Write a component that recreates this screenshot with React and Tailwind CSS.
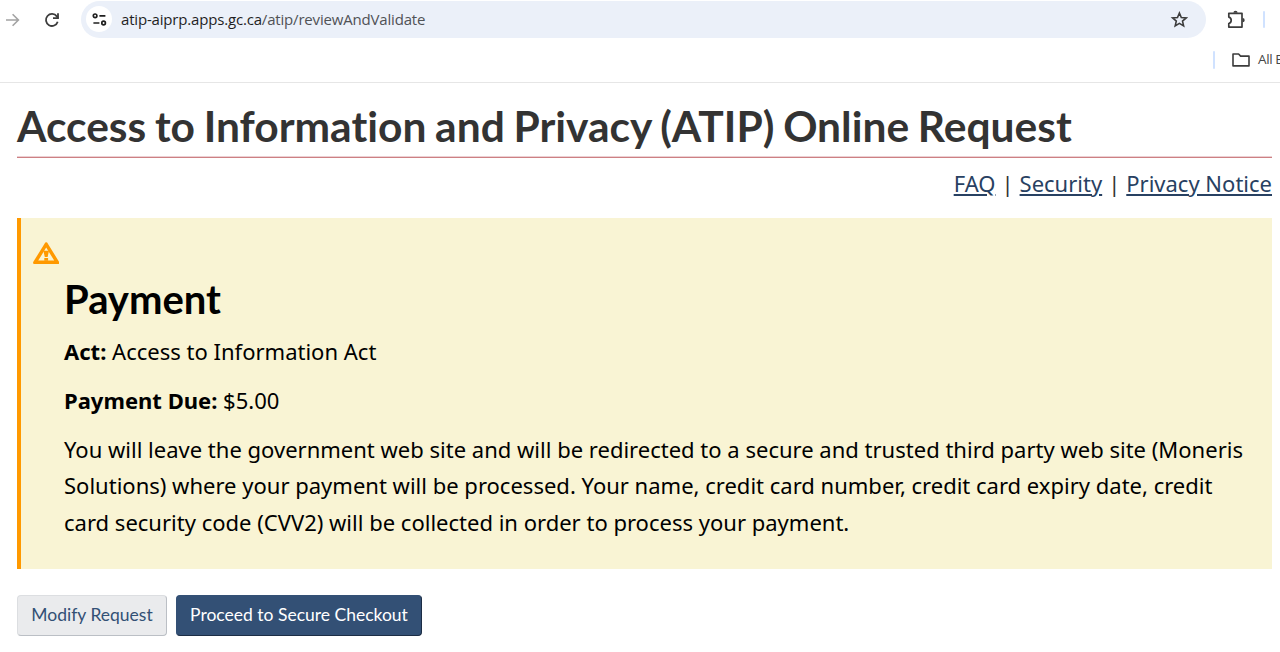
import React from 'react';

// --- ICONS ---

const ForwardIcon = () => (
  <svg viewBox="0 0 16 16" className="size-4 shrink-0" fill="none" stroke="#a3a3a3" strokeWidth="1.6">
    <path d="M2 8h12.2M8.6 2.2 14.4 8l-5.8 5.8" />
  </svg>
);

const ReloadIcon = () => (
  <svg viewBox="0 0 16 16" className="size-4 shrink-0" fill="none" stroke="#3c3c3c" strokeWidth="1.8">
    <path d="M13.7 9.7A6 6 0 1 1 12.8 4.4L14 6" />
    <path d="M14 1.2V6.1H9" />
  </svg>
);

const SiteSettingsIcon = () => (
  <svg viewBox="0 0 16 16" className="size-4" fill="none" stroke="#1f1f1f" strokeWidth="1.7">
    <circle cx="4.1" cy="4.8" r="1.8" />
    <path d="M8.4 4.8h6M2.4 12h6" />
    <circle cx="12.6" cy="12" r="1.8" />
  </svg>
);

const StarIcon = () => (
  <svg viewBox="0 0 18 18" className="size-[18px]" fill="none" stroke="#3c3c3c" strokeWidth="1.6">
    <path d="m9.4 3 1.9 4.5 4.9.4-3.7 3.2 1.1 4.8-4.2-2.5-4.2 2.5 1.1-4.8-3.7-3.2 4.9-.4z" />
  </svg>
);

const ExtensionsIcon = () => (
  <svg viewBox="0 0 20 20" className="size-5 shrink-0">
    <path
      d="M2.8 3.3h13.2v13.8H2.8v-3.6c3.2-.8 3.2-5.6 0-6.4z"
      fill="none"
      stroke="#3c3c3c"
      strokeWidth="1.7"
      strokeLinejoin="round"
    />
    <path d="M7.4 2.8a2.1 2.1 0 0 1 4.2 0zM16.6 8.1a2.1 2.1 0 0 1 0 4.2z" fill="#3c3c3c" />
  </svg>
);

const FolderIcon = () => (
  <svg viewBox="0 0 18 14" className="h-[14px] w-[18px] shrink-0" fill="none" stroke="#3c3c3c" strokeWidth="1.6" strokeLinejoin="round">
    <path d="M1 1h5.6l2 2.1H17v9.8H1z" />
  </svg>
);

const WarningIcon = () => (
  <svg viewBox="0 0 26 22" className="h-[22px] w-[26px]" fill="#ff9900">
    <path
      fillRule="evenodd"
      d="M12.3.6q.9-.9 1.8 0L26.2 20q.5 2-1 2H1.2q-1.5 0-1-2zM13.2 5.6 5.2 18.6h16z"
    />
    <path d="M10.4 8.8h5.6l-1.4 6.2h-2.8zM11.3 16h3.8v2.8h-3.8z" />
  </svg>
);

// --- COMPONENTS ---

const BrowserBar = () => (
  <div className="h-[83px] border-b border-[#e6e6e6] font-['Open_Sans',sans-serif]">
    <div className="flex h-[39px] items-center">
      <div className="ml-1 flex w-[77px] items-center gap-6">
        <ForwardIcon />
        <ReloadIcon />
      </div>
      <div className="mb-px flex h-[37px] w-[1125px] items-center rounded-full bg-[#ebf0f9] pr-[18px] pl-[5px]">
        <div className="flex size-[26px] items-center justify-center rounded-full bg-white">
          <SiteSettingsIcon />
        </div>
        <span className="ml-[9px] flex-1 text-[15px] tracking-[-0.012em] text-[#1f1f1f]">
          atip-aiprp.apps.gc.ca<span className="text-[#505256]">/atip/reviewAndValidate</span>
        </span>
        <StarIcon />
      </div>
      <div className="ml-5 flex items-center gap-[17px]">
        <ExtensionsIcon />
        <div className="h-[17px] w-[2px] rounded-[1px] bg-[#d0e2ff]" />
      </div>
    </div>
    <div className="flex h-[42px] items-center justify-end overflow-hidden whitespace-nowrap">
      <div className="h-[18px] w-[2px] shrink-0 rounded-[1px] bg-[#d0e2ff]" />
      <div className="ml-[17px] flex w-[48px] shrink-0 items-center gap-[8px] text-[13.5px] tracking-[-0.03em] text-[#474747]">
        <FolderIcon />
        <span className="pb-px">All Bookmarks</span>
      </div>
    </div>
  </div>
);

const PaymentAlert = () => (
  <section className="flex h-[351px] border-l-[4px] border-[#ff9900] bg-[#f9f4d4] text-black">
    <div className="w-[43px] shrink-0 pt-[24px] pl-[12px]">
      <WarningIcon />
    </div>
    <div className="pt-[57px] text-[22.02px] leading-[36.4px]">
      <h2 className="font-['Lato',sans-serif] text-[40px] leading-[48px] font-bold">Payment</h2>
      <p className="mt-[10px]">
        <strong>Act:</strong> Access to Information Act
      </p>
      <p className="mt-[12.5px]">
        <strong>Payment Due:</strong> $5.00
      </p>
      <p className="mt-[12.5px] whitespace-nowrap">
        You will leave the government web site and will be redirected to a secure and trusted third party web site (Moneris
        <br />
        Solutions) where your payment will be processed. Your name, credit card number, credit card expiry date, credit
        <br />
        card security code (CVV2) will be collected in order to process your payment.
      </p>
    </div>
  </section>
);

// --- MAIN APP ---

export default function App() {
  return (
    <div className="h-[652px] w-full overflow-hidden bg-white font-['Noto_Sans',sans-serif]">
      <BrowserBar />

      <main className="pr-[8px] pl-[17px]">
        <h1 className="h-[73px] pt-[17px] font-['Lato',sans-serif] text-[42.5px] leading-[52px] font-bold whitespace-nowrap text-[#333] [font-variant-ligatures:none] [word-spacing:-1.6px]">
          Access to Information and Privacy (ATIP) Online Request
        </h1>
        <div className="h-px bg-[#ecd0d3]" />
        <div className="h-px bg-[#cd8083]" />

        <nav className="mt-[7px] mb-[17px] flex h-[36px] items-center justify-end gap-[6px] text-[22px] text-[#333]">
          <a className="text-[#284162] underline" href="#faq">FAQ</a>
          <span>|</span>
          <a className="text-[#284162] underline" href="#security">Security</a>
          <span>|</span>
          <a className="text-[#284162] underline" href="#privacy">Privacy Notice</a>
        </nav>

        <PaymentAlert />

        <div className="mt-[26px] flex gap-[9px] font-['Lato',sans-serif] text-[17.5px]">
          <button className="h-[41px] w-[150px] rounded-[4px] border border-[#dcdee1] border-r-[#bbbfc5] border-b-[#bbbfc5] bg-[#eaebed] text-[#335075]">
            Modify Request
          </button>
          <button className="h-[41px] w-[246px] rounded-[4px] border border-[#335075] border-r-[#1c2d45] border-b-[#1c2d45] bg-[#335075] text-white">
            Proceed to Secure Checkout
          </button>
        </div>
      </main>
    </div>
  );
}
